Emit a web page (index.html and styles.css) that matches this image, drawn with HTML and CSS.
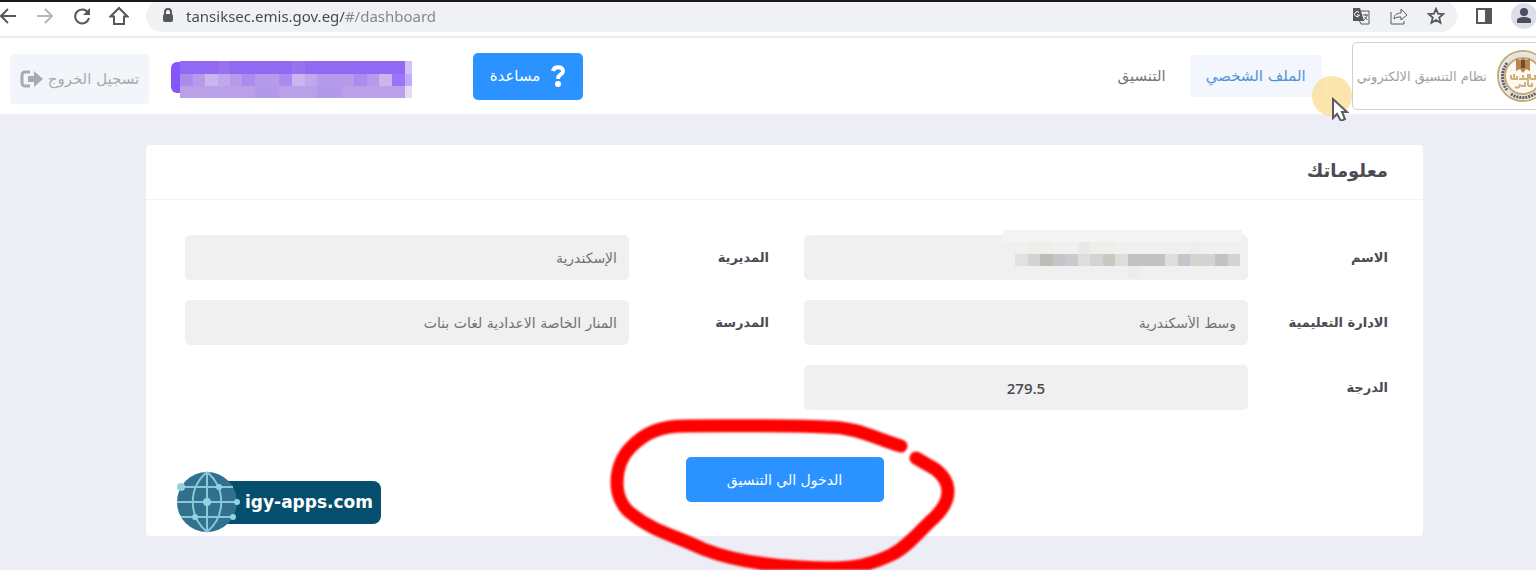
FILE: index.html
```html
<!DOCTYPE html>
<html lang="ar" dir="rtl">
<head>
<meta charset="UTF-8">
<meta name="viewport" content="width=device-width, initial-scale=1.0">
<title>نظام التنسيق الالكتروني</title>
<link rel="stylesheet" href="styles.css">
</head>
<body>

<!-- Browser toolbar -->
<div class="toolbar" dir="ltr">
    <button class="tool back" aria-label="Back">
        <svg width="20" height="20" viewBox="0 0 20 20"><path d="M18 10H3M10 3L3 10l7 7"/></svg>
    </button>
    <button class="tool forward" aria-label="Forward">
        <svg width="20" height="20" viewBox="0 0 20 20"><path d="M2 10h15M10 3l7 7-7 7"/></svg>
    </button>
    <button class="tool" aria-label="Reload">
        <svg width="20" height="20" viewBox="0 0 20 20"><path d="M16 6.500A7 7 0 1 0 17 12"/><path class="fill" d="M18 2v7h-7z"/></svg>
    </button>
    <button class="tool" aria-label="Home">
        <svg width="20" height="20" viewBox="0 0 20 20"><path d="M1.500 10.500L10 2l8.500 8.500H15V18H5v-7.500z"/></svg>
    </button>
    <div class="address">
        <svg class="lock" width="12" height="16" viewBox="0 0 12 16"><rect x="2" y="7" width="8" height="6" rx="1"/><path d="M3 7V4a3 3 0 0 1 6 0v3"/></svg>
        <input class="url" type="text" aria-label="Address" value="tansiksec.emis.gov.eg/#/dashboard">
        <button class="tool" aria-label="Translate">
            <svg width="20" height="20" viewBox="0 0 20 20"><path class="thin" d="M9 5h9v13h-8l-2-4"/><path class="fill" d="M2 2h7l4 13H2z"/><path class="light" d="M8 6.500A2.500 2.500 0 1 0 8.500 9H6"/><path class="thin" d="M12 9h5M14.500 8v1M16 9c0 2-2 4-3 5M13.500 11l3 3"/></svg>
        </button>
        <button class="tool" aria-label="Share">
            <svg width="20" height="20" viewBox="0 0 20 20"><path class="thin" d="M2 6v12h13v-3"/><path class="thin" d="M5 13c0-4 3-6 7-6V3l6 6-6 5v-3c-3 0-5 0-7 2z"/></svg>
        </button>
        <button class="tool" aria-label="Bookmark">
            <svg width="18" height="18" viewBox="0 0 20 20"><path d="M10 2l2.300 5.400 5.700.5-4.400 3.800 1.400 5.800-5-3.100-5 3.100 1.400-5.800L2 7.900l5.700-.5z"/></svg>
        </button>
    </div>
    <button class="tool" aria-label="Side panel">
        <svg width="20" height="20" viewBox="0 0 20 20"><rect x="3" y="3" width="14" height="14"/><path class="fill" d="M11 3h6v14h-6z"/></svg>
    </button>
    <button class="profile" aria-label="Profile">
        <svg width="16" height="16" viewBox="0 0 16 16"><circle cx="8" cy="4" r="4"/><path d="M1 15v-3c0-2 4-3 7-3s7 1 7 3v3z"/></svg>
    </button>
</div>

<div class="navbar">
    <a class="brand" href="#">
        <svg width="52" height="52" viewBox="0 0 52 52">
            <circle cx="26" cy="26" r="25" fill="#fff" stroke="#c5ab7c" stroke-width="2"/>
            <circle cx="26" cy="26" r="21" fill="none" stroke="#e6e2dc" stroke-width="5"/>
            <path d="M10 13C4 22 4 32 10 40M14 44c7 5 17 5 25-1" fill="none" stroke="#5c5d66" stroke-width="3" stroke-dasharray="2 1"/>
            <circle cx="26" cy="26" r="18" fill="#fdf9f0" stroke="#c5ab7c" stroke-width="2"/>
            <path d="M19 8l4 2 3-2 3 2 4-2v13l-4-2-3 4-3-4-4 2z" fill="#b78650"/>
            <path d="M24 10h4v8h-4z" fill="#764a31"/>
            <path d="M14 29v-4M17 29v-5M14 29h6v-3M22 29h4v-4M26 29h5v-5M33 29v-5M33 29h5v-4M18 37c4 2 5-1 5-3M24 36h4v-4M31 36v-6M31 36h4v-3" fill="none" stroke="#ccb27f" stroke-width="2"/>
        </svg>
        <span>نظام التنسيق الالكتروني</span>
    </a>
    <a class="nav-link active" href="#">الملف الشخصي</a>
    <a class="nav-link" href="#">التنسيق</a>

    <button class="btn help">
        <svg width="16" height="22" viewBox="0 0 16 22"><path d="M3 6c1-5 10-5 10 0 0 4-5 3-5 8" fill="none" stroke="#fff" stroke-width="4"/><circle cx="8" cy="19" r="3" fill="#fff"/></svg>
        مساعدة
    </button>
    <div class="user-chip">
        <svg width="241" height="38" viewBox="0 0 241 38" shape-rendering="crispEdges">
            <rect x="0" y="1" width="30" height="31" rx="6" fill="#8456fb" shape-rendering="auto"/>
            <path d="M9 0h225v13H9z" fill="#9169f4"/>
            <path d="M9 13h225v12H9z" fill="#b89aec"/>
            <path d="M9 25h225v12H9z" fill="#b9a0e8"/>
            <path d="M9 13h13v12H9zM71 13h13v12H71zM108 13h13v12h-13zM183 13h13v12h-13z" fill="#ac8bf0"/>
            <path d="M34 13h13v12H34zM121 13h13v12h-13zM208 13h13v12h-13z" fill="#cbb5f0"/>
            <path d="M47 13h12v12H47zM134 13h12v12h-12z" fill="#c0a7ee"/>
            <path d="M221 13h13v12h-13z" fill="#9d74f7"/>
            <path d="M47 0h12v13H47zM121 0h13v13h-13z" fill="#9972ef"/>
            <path d="M84 25h24v12H84zM146 25h25v12h-25z" fill="#b399e9"/>
            <path d="M234 0h7v13h-7z" fill="#d2c2f3"/>
            <path d="M234 13h7v12h-7z" fill="#c0abfa"/>
            <path d="M234 25h7v12h-7z" fill="#e5dbf4"/>
        </svg>
    </div>
    <button class="logout">
        تسجيل الخروج
        <svg width="24" height="20" viewBox="0 0 24 20"><path d="M10 3H5a3 3 0 0 0-3 3v8a3 3 0 0 0 3 3h5" fill="none" stroke="#a9a9b0" stroke-width="3"/><path d="M8 7h6V2l9 8-9 8v-5H8z" fill="#a9a9b0"/></svg>
    </button>

    <svg class="pointer" width="44" height="46" viewBox="0 0 44 46">
        <circle cx="20" cy="21" r="20" fill="#fbdc8b" fill-opacity=".7"/>
        <path d="M21 24v19l4-4 4 7 4-2-3-7h5z" fill="#fff" stroke="#5c5a63" stroke-width="2"/>
    </svg>
</div>

<main class="content">
    <div class="card">
        <h1>معلوماتك</h1>
        <form class="fields">
            <div class="field">
                <label for="name">الاسم</label>
                <div class="masked">
                    <input id="name" type="text" readonly>
                    <svg class="mask" width="240" height="50" viewBox="0 0 240 50" shape-rendering="crispEdges">
                        <path d="M0 0h239v12H0z" fill="#f4f3f5"/>
                        <path d="M25 12h25v12H25zM87 12h25v12H87zM187 12h12v12h-12z" fill="#eeeeea"/>
                        <path d="M75 12h12v12H75z" fill="#e8e9eb"/>
                        <path d="M12 24h225v12H12z" fill="#d3d3d2"/>
                        <path d="M12 24h13v12H12z" fill="#e1e1e2"/>
                        <path d="M37 24h13v12H37z" fill="#bdbdb7"/>
                        <path d="M50 24h12v12H50zM175 24h12v12h-12z" fill="#c5c5cb"/>
                        <path d="M62 24h13v12H62z" fill="#c9cacd"/>
                        <path d="M75 24h12v12H75zM112 24h13v12h-13zM162 24h13v12h-13z" fill="#dddddb"/>
                        <path d="M100 24h12v12h-12z" fill="#c9c9c2"/>
                        <path d="M125 24h37v12h-37zM212 24h13v12h-13z" fill="#c1c2c1"/>
                        <path d="M125 36h12v12h-12z" fill="#ededE8"/>
                    </svg>
                </div>
            </div>
            <div class="field">
                <label for="directorate">المديرية</label>
                <input id="directorate" type="text" value="الإسكندرية" readonly>
            </div>
            <div class="field">
                <label for="administration">الادارة التعليمية</label>
                <input id="administration" type="text" value="وسط الأسكندرية" readonly>
            </div>
            <div class="field">
                <label for="school">المدرسة</label>
                <input id="school" type="text" value="المنار الخاصة الاعدادية لغات بنات" readonly>
            </div>
            <div class="field">
                <label for="degree">الدرجة</label>
                <input id="degree" class="degree" type="text" value="279.5" readonly>
            </div>
        </form>
        <div class="actions">
            <button class="btn enter">الدخول الي التنسيق</button>
            <svg class="circle" width="370" height="156" viewBox="600 414 370 156">
                <path d="M900 446C875 439 857 427 825 427C780 425 735 426 685 426C660 426 645 432 630 447C612 465 610 500 632 515C652 531 675 536 702 549C730 560 760 565 800 567C845 570 865 567 890 555C907 547 920 529 933 518C953 499 950 481 934 469L915 458"/>
            </svg>
        </div>

        <!-- Site badge -->
        <div class="badge" dir="ltr">
            <svg width="64" height="62" viewBox="0 0 64 62">
                <circle cx="30" cy="31" r="30" fill="#32718d"/>
                <g fill="none" stroke="#88c8d8" stroke-width="2">
                    <path d="M30 1v60M4 16h52M0 31h60M4 46h52"/>
                    <path d="M30 1C11 17 11 45 30 61M30 1c19 16 19 44 0 60"/>
                </g>
                <g fill="#91d3e0">
                    <circle cx="4" cy="16" r="4"/><circle cx="42" cy="16" r="3"/><circle cx="30" cy="31" r="4"/>
                    <circle cx="60" cy="31" r="3"/><circle cx="18" cy="46" r="3"/><circle cx="56" cy="46" r="3"/>
                </g>
            </svg>
            <span>igy-apps.com</span>
        </div>
    </div>
</main>

</body>
</html>
```
FILE: styles.css
```css
* {
    box-sizing: border-box;
}
body {
    font-family: "DejaVu Sans", sans-serif;
    font-size: 14px;
    margin: 0;
    background-color: #ededf6;
    color: #4c4b52;
}
button, input {
    font-family: inherit;
    font-size: inherit;
    border: none;
}
a {
    text-decoration: none;
}

/* browser toolbar */
.toolbar {
    display: flex;
    align-items: center;
    gap: 17px;
    height: 38px;
    padding-bottom: 7px;
    background-color: #fff;
    border-top: 2px solid #1b191d;
    border-bottom: 2px solid #e9ebee;
    overflow: hidden;
}
.tool {
    display: flex;
    padding: 0;
    background: none;
}
.tool svg {
    fill: none;
    stroke: #57585b;
    stroke-width: 2;
}
.tool .fill {
    fill: #57585b;
    stroke: none;
}
.tool .thin {
    stroke-width: 1;
}
.tool .light {
    stroke: #fff;
    stroke-width: 1;
}
.back {
    margin-left: -2px;
}
.forward svg {
    stroke: #b5b6b8;
}
.address {
    flex: 1;
    display: flex;
    align-items: center;
    gap: 18px;
    height: 32px;
    padding: 0 12px 0 16px;
    background-color: #eff1f3;
    border-radius: 16px;
}
.lock {
    fill: #57585b;
    stroke: #57585b;
    stroke-width: 2;
}
.lock path {
    fill: none;
}
.url {
    flex: 1;
    margin-left: -6px;
    padding: 0;
    font-family: "Noto Sans", sans-serif;
    font-size: 15px;
    color: transparent;
    background: linear-gradient(to right, #44464a 160px, #818387 160px);
    -webkit-background-clip: text;
    background-clip: text;
}
.profile {
    display: flex;
    align-items: center;
    justify-content: center;
    width: 26px;
    height: 26px;
    margin-right: -1px;
    padding: 0;
    background-color: #dcdfe9;
    border-radius: 50%;
}
.profile svg {
    fill: #4b4e5e;
}

/* navbar */
.navbar {
    position: relative;
    display: flex;
    align-items: center;
    height: 76px;
    padding-left: 10px;
    background-color: #fff;
    overflow: clip;
    overflow-clip-margin: 10px;
}
.brand {
    display: flex;
    align-items: center;
    gap: 10px;
    height: 68px;
    margin-right: -14px;
    padding: 0 0 0 4px;
    border: 1px solid #cfd0d4;
    border-radius: 5px;
    font-size: 13px;
    color: #a09fa5;
}
.nav-link {
    padding: 12px 16px;
    font-size: 15px;
    line-height: 18px;
    color: #77757b;
    border-radius: 4px;
}
.nav-link.active {
    margin-right: 30px;
    margin-left: 8px;
    background-color: #f3f6fd;
    color: #4f93da;
}
.btn {
    background-color: #2b93ff;
    color: #fff;
    border-radius: 5px;
}
.help {
    display: flex;
    align-items: center;
    justify-content: center;
    gap: 10px;
    width: 110px;
    height: 47px;
    margin-right: auto;
    font-size: 15px;
}
.user-chip {
    display: flex;
    margin: 8px 61px 0 22px;
}
.logout {
    display: flex;
    align-items: center;
    justify-content: center;
    gap: 4px;
    width: 139px;
    height: 50px;
    padding: 0;
    margin-top: 6px;
    background-color: #f2f6fa;
    color: #aaa9af;
    border-radius: 4px;
    font-size: 15px;
}
.pointer {
    position: absolute;
    top: 37px;
    right: 180px;
}

/* info card */
.content {
    padding: 31px 113px 35px 146px;
}
.card {
    position: relative;
    background-color: #fff;
    border-radius: 4px;
}
h1 {
    margin: 0;
    padding: 14px 35px 16px;
    font-size: 18px;
    line-height: 24px;
    border-bottom: 1px solid #f3f3f6;
}
.fields {
    display: grid;
    grid-template-columns: 1fr 1fr;
    gap: 20px 35px;
    padding: 35px 35px 0 39px;
}
.field {
    display: flex;
    align-items: center;
}
.field label {
    width: 140px;
    font-size: 13px;
    font-weight: bold;
}
.field input {
    flex: 1;
    width: 100%;
    min-width: 0;
    height: 45px;
    padding: 0 12px;
    background-color: #f0f0f0;
    color: #717075;
    border-radius: 5px;
}
.field .degree {
    text-align: center;
    font-family: "Open Sans", sans-serif;
    font-size: 15px;
    font-weight: 600;
    color: #4c4b52;
}
.masked {
    position: relative;
    flex: 1;
    display: flex;
}
.mask {
    position: absolute;
    top: -5px;
    right: 5px;
}
.actions {
    position: relative;
    display: flex;
    justify-content: center;
    padding: 47px 0 34px;
}
.enter {
    width: 198px;
    height: 45px;
}

/* hand drawn ring round the button */
.circle {
    position: absolute;
    top: 4px;
    left: calc(50% - 184px);
    fill: none;
    stroke: #fe0000;
    stroke-width: 13;
    stroke-linecap: round;
    stroke-linejoin: round;
    filter: blur(1px);
    pointer-events: none;
}
.badge {
    position: absolute;
    left: 31px;
    bottom: 3px;
    display: flex;
    align-items: center;
}
.badge svg {
    position: relative;
    z-index: 1;
}
.badge span {
    margin-left: -30px;
    padding: 0 8px 0 34px;
    font-size: 17px;
    font-weight: bold;
    line-height: 43px;
    background-color: #064e6d;
    color: #fff;
    border-radius: 8px;
}
```
